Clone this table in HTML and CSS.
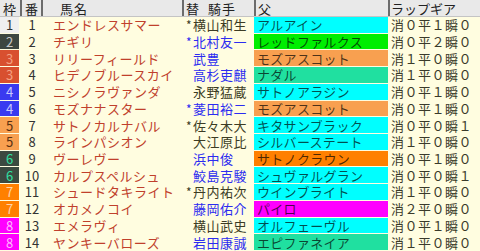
FILE: index.html
```html
<!DOCTYPE html>
<html lang="ja">
<head>
<meta charset="utf-8">
<link rel="stylesheet" href="styles.css">
</head>
<body>
<div class="table">
  <div class="row head">
    <div class="c waku h">枠</div>
    <div class="c num h">番</div>
    <div class="c name h">馬名</div>
    <div class="c jockey h"><span class="kae">替</span>騎手</div>
    <div class="c sire h">父</div>
    <div class="c lap h">ラップギア</div>
  </div>

  <div class="row"><div class="c waku w1">1</div><div class="c num">1</div><div class="c name">エンドレスサマー</div><div class="c jockey dark"><span class="ast">*</span>横山和生</div><div class="c sire s-cyan">アルアイン</div><div class="c lap">消０平１瞬０</div></div>
  <div class="row"><div class="c waku w2">2</div><div class="c num">2</div><div class="c name">チギリ</div><div class="c jockey blue"><span class="ast">*</span>北村友一</div><div class="c sire s-green">レッドファルクス</div><div class="c lap">消０平２瞬０</div></div>
  <div class="row"><div class="c waku w3">3</div><div class="c num">3</div><div class="c name">リリーフィールド</div><div class="c jockey blue"><span class="ast"></span>武豊</div><div class="c sire s-orange">モズアスコット</div><div class="c lap">消１平０瞬０</div></div>
  <div class="row"><div class="c waku w3">3</div><div class="c num">4</div><div class="c name">ヒデノブルースカイ</div><div class="c jockey blue"><span class="ast"></span>高杉吏麒</div><div class="c sire s-teal">ナダル</div><div class="c lap">消１平０瞬０</div></div>
  <div class="row"><div class="c waku w4">4</div><div class="c num">5</div><div class="c name">ニシノラヴァンダ</div><div class="c jockey dark"><span class="ast"></span>永野猛蔵</div><div class="c sire s-cyan">サトノアラジン</div><div class="c lap">消０平１瞬０</div></div>
  <div class="row"><div class="c waku w4">4</div><div class="c num">6</div><div class="c name">モズナナスター</div><div class="c jockey blue"><span class="ast">*</span>菱田裕二</div><div class="c sire s-orange">モズアスコット</div><div class="c lap">消０平１瞬０</div></div>
  <div class="row"><div class="c waku w5">5</div><div class="c num">7</div><div class="c name">サトノカルナバル</div><div class="c jockey dark"><span class="ast">*</span>佐々木大</div><div class="c sire s-cyan">キタサンブラック</div><div class="c lap">消０平０瞬１</div></div>
  <div class="row"><div class="c waku w5">5</div><div class="c num">8</div><div class="c name">ラインパシオン</div><div class="c jockey dark"><span class="ast"></span>大江原比</div><div class="c sire s-cyan">シルバーステート</div><div class="c lap">消１平０瞬０</div></div>
  <div class="row"><div class="c waku w6">6</div><div class="c num">9</div><div class="c name">ヴーレヴー</div><div class="c jockey blue"><span class="ast"></span>浜中俊</div><div class="c sire s-dorange">サトノクラウン</div><div class="c lap">消０平１瞬０</div></div>
  <div class="row"><div class="c waku w6">6</div><div class="c num">10</div><div class="c name">カルプスペルシュ</div><div class="c jockey blue"><span class="ast"></span>鮫島克駿</div><div class="c sire s-cyan">シュヴァルグラン</div><div class="c lap">消０平０瞬１</div></div>
  <div class="row"><div class="c waku w7">7</div><div class="c num">11</div><div class="c name">シュードタキライト</div><div class="c jockey dark"><span class="ast">*</span>丹内祐次</div><div class="c sire s-cyan">ウインブライト</div><div class="c lap">消１平０瞬０</div></div>
  <div class="row"><div class="c waku w7">7</div><div class="c num">12</div><div class="c name">オカメノコイ</div><div class="c jockey blue"><span class="ast"></span>藤岡佑介</div><div class="c sire s-magenta">パイロ</div><div class="c lap">消２平０瞬０</div></div>
  <div class="row"><div class="c waku w8">8</div><div class="c num">13</div><div class="c name">エメラヴィ</div><div class="c jockey dark"><span class="ast"></span>横山武史</div><div class="c sire s-cyan">オルフェーヴル</div><div class="c lap">消０平１瞬０</div></div>
  <div class="row"><div class="c waku w8">8</div><div class="c num">14</div><div class="c name">ヤンキーバローズ</div><div class="c jockey blue"><span class="ast"></span>岩田康誠</div><div class="c sire s-teal">エピファネイア</div><div class="c lap">消１平０瞬０</div></div>
</div>
</body>
</html>
```

FILE: styles.css
```css
html, body {
  margin: 0;
  padding: 0;
}
body {
  width: 480px;
  height: 251px;
  overflow: hidden;
  background: #fffde0;
  font-family: "Noto Sans CJK JP", "Noto Sans", sans-serif;
  font-size: 13px;
  color: #333;
}
.table {
  display: grid;
  grid-template-rows: 17px repeat(14, 1fr);
  height: 251px;
}
.row {
  display: grid;
  grid-template-columns: 21px 22px 140px 71px 134px 1fr;
  min-height: 0;
}
.c {
  display: flex;
  align-items: center;
  white-space: nowrap;
  line-height: 15px;
  margin-bottom: 1px;
  min-width: 0;
}

/* header */
.row.head {
  grid-template-columns: 22px 21px 141px 72px 134px 1fr;
  background: #e9e9e9;
  border-bottom: 1px solid #c4c4c4;
}
.head .c { margin: 0; color: #222; }
.h { border-right: 2px solid #6c6c6c; }
.head .lap { border-right: none; }
.head .waku { justify-content: center; padding-right: 1px; }
.head .num { justify-content: center; }
.head .name { padding-left: 17px; letter-spacing: 1px; }
.head .jockey { padding-left: 2px; letter-spacing: 1px; }
.head .jockey .kae { margin-right: 8px; }
.head .sire { padding-left: 2px; }
.head .lap { padding-left: 1px; letter-spacing: 0; }

/* body cells */
.waku {
  justify-content: center;
  margin-right: 2px;
}
.num { justify-content: center; color: #333; }
.name { padding-left: 10px; color: #c0402c; letter-spacing: 0.5px; }
.jockey { padding-left: 3px; letter-spacing: 0.5px; }
.ast { display: inline-block; width: 7px; font-size: 12px; }
.jockey.blue { color: #2c2cf0; }
.jockey.dark { color: #3c3c24; }
.sire {
  padding-left: 3px;
  color: rgba(0, 0, 0, 0.7);
  letter-spacing: 0.3px;
}
.lap { padding-left: 3px; color: #3a3a2a; letter-spacing: 0.5px; }

.w1 { background: #efefef; color: #333; }
.w2 { background: #3c4640; color: #c8c8c8; }
.w3 { background: #d8502f; color: #f4a080; }
.w4 { background: #3a3af0; color: #c8c8ff; }
.w5 { background: #f8a050; color: #5a3010; }
.w6 { background: #3c4a40; color: #30e0a0; }
.w7 { background: #ff8000; color: #ffd4a8; }
.w8 { background: #ff00ff; color: #ffb8ff; }

.s-cyan { background: #00ffff; }
.s-green { background: #00ee00; }
.s-orange { background: #f8a050; }
.s-dorange { background: #ff8000; }
.s-teal { background: #20e0a0; }
.s-magenta { background: #ff00ff; }
```
